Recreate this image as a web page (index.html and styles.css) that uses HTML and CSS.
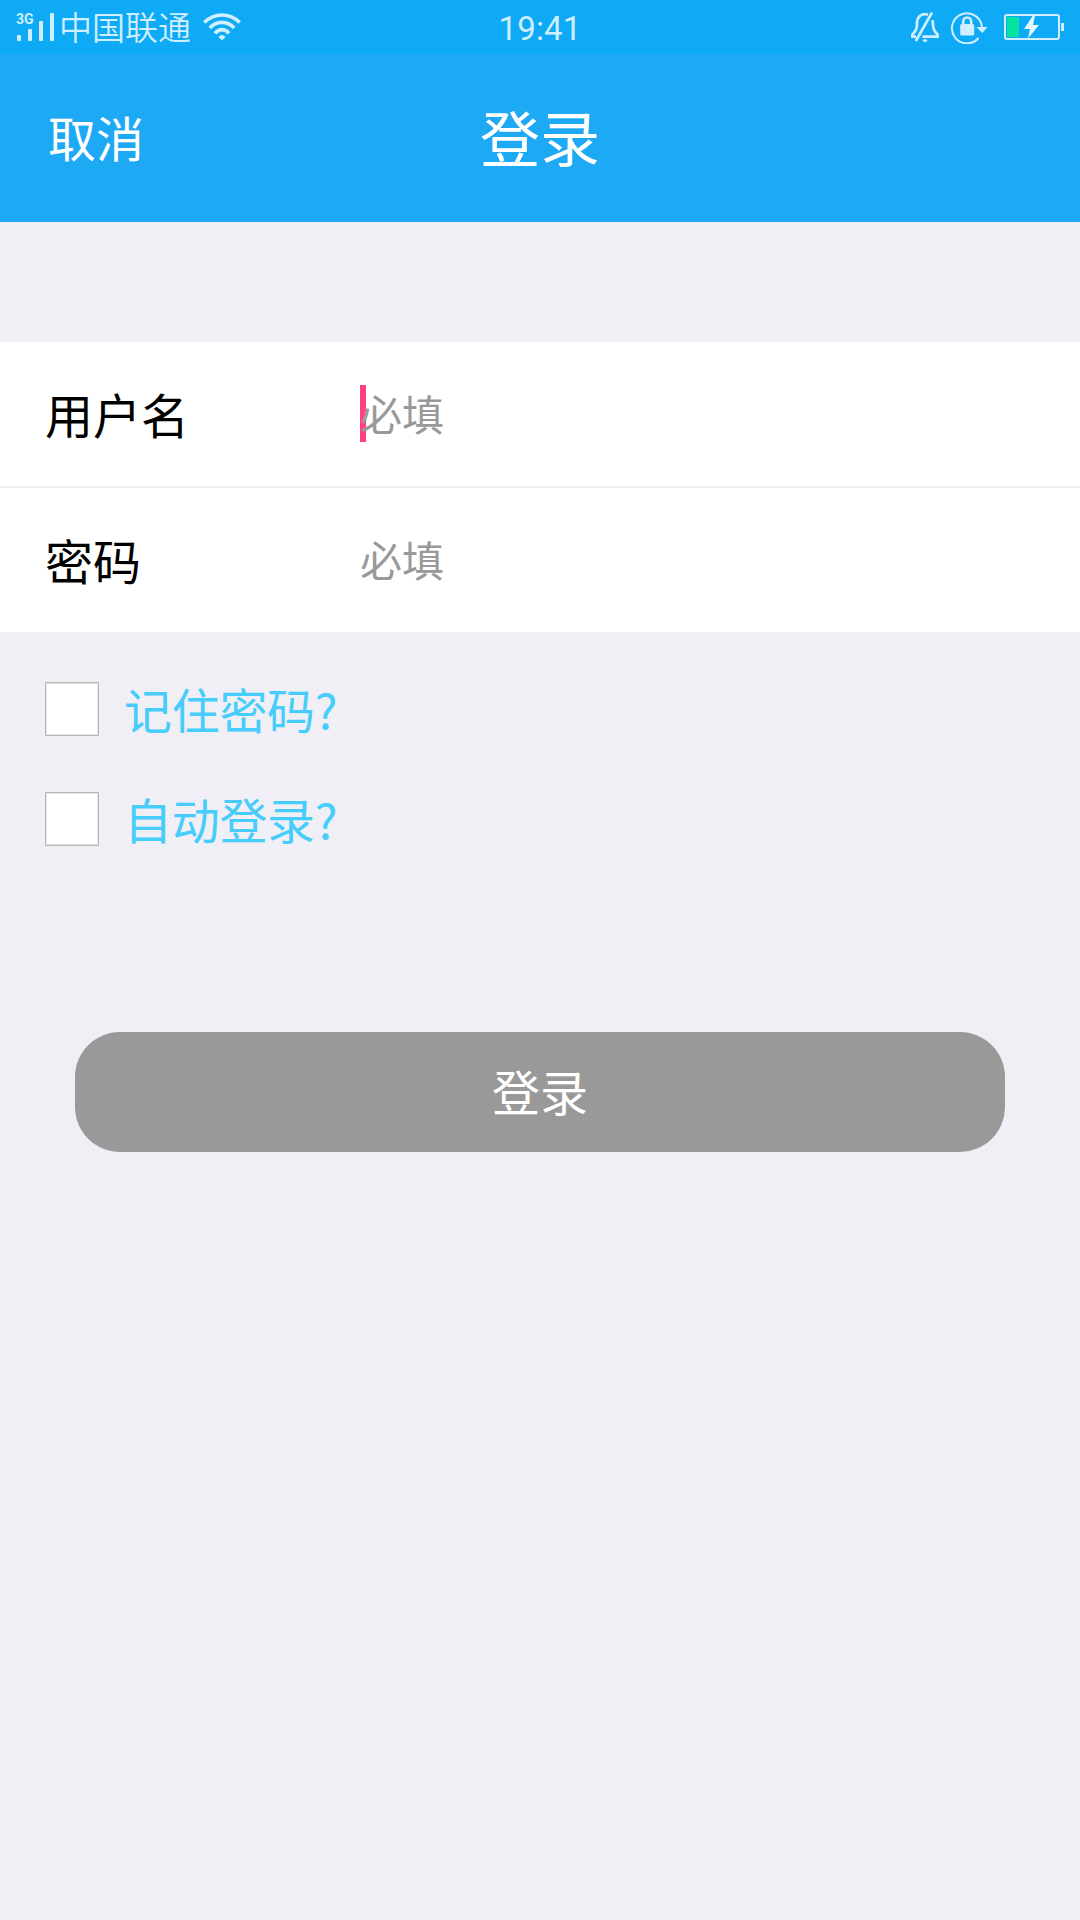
FILE: index.html
```html
<!DOCTYPE html>
<html lang="zh-CN">
<head>
<meta charset="utf-8">
<title>登录</title>
<link rel="stylesheet" href="styles.css">
</head>
<body>
<div class="status">
  <div class="status-left">
    <div class="signal">
      <span class="network">3G</span>
      <svg class="bars" width="38" height="29" viewBox="0 0 38 29" fill="currentColor">
        <rect x="0" y="22" width="4" height="6" rx="1"/><rect x="11" y="16" width="4" height="12" rx="1"/><rect x="22" y="8" width="4" height="20" rx="1"/><rect x="33" y="0" width="4" height="28" rx="1"/>
      </svg>
    </div>
    <span class="carrier">中国联通</span>
    <svg class="wifi" width="38" height="28" viewBox="0 0 38 28" fill="none" stroke="currentColor" stroke-width="3.7">
      <path d="M1.3 9.5Q9 2 19 2T36.7 9.5M6.8 15Q12 9.3 19 9.3T31.2 15M12 20.4Q15 16.6 19 16.6T26 20.4"/>
      <path d="M15.3 23.7Q19 20.2 22.7 23.7L19 27.5Z" fill="currentColor" stroke="none"/>
    </svg>
  </div>
  <span class="clock">19:41</span>
  <div class="status-right">
    <svg width="30" height="32" viewBox="0 0 30 32" fill="none" stroke="currentColor" stroke-width="2.7">
      <path d="M18 3.600C11 1.800 7 6.500 7 12C7 19 5.500 20 2.400 23.500V25.600H6M22.700 9C23 18.500 24 20 27.600 23.500V25.600H12.500"/>
      <path d="M22 1.500L5.800 30"/>
      <ellipse cx="15" cy="29.500" rx="2.200" ry="1.500" fill="currentColor" stroke="none"/>
    </svg>
    <svg width="37" height="33" viewBox="0 0 37 33" fill="none" stroke="currentColor" stroke-width="2">
      <path d="M27.500 27A15 15 0 1 1 31 17"/>
      <path d="M25.500 16H36.500L31.200 22Z" fill="currentColor" stroke="none"/>
      <path d="M12.200 14V10.500A4 4 0 0 1 20.200 10.500V14" stroke-width="2.600"/>
      <rect x="9.200" y="13" width="14" height="11.500" rx="1.500" fill="currentColor" stroke="none"/>
    </svg>
    <svg class="battery" width="60" height="26" viewBox="0 0 60 26">
      <rect x="1" y="1" width="54" height="24" rx="2" fill="none" stroke="currentColor" stroke-width="2"/>
      <rect x="3" y="3" width="12" height="20" fill="#06e2a0"/>
      <path d="M29 1.500L20 15H26L24 24.500L35 11H29L31 1.500Z" fill="#e4f6ff"/>
      <rect x="57" y="9" width="3" height="8" fill="currentColor"/>
    </svg>
  </div>
</div>
<header class="header">
  <span class="cancel">取消</span>
  <h1 class="title">登录</h1>
</header>
<main>
  <div class="fields">
    <div class="row"><span class="label">用户名</span><span class="hint"><i class="caret"></i>必填</span></div>
    <div class="row"><span class="label">密码</span><span class="hint">必填</span></div>
  </div>
  <div class="options">
    <div class="option"><span class="box"></span><span class="option-text">记住密码?</span></div>
    <div class="option"><span class="box"></span><span class="option-text">自动登录?</span></div>
  </div>
  <button class="submit">登录</button>
</main>
</body>
</html>
```
FILE: styles.css
```css
* { box-sizing: border-box; }
body {
  margin: 0;
  min-height: 1920px;
  background: #f0eff5;
  font-family: "Noto Sans CJK SC", sans-serif;
  color: #000;
}
svg { display: block; }
.status {
  height: 54px;
  padding: 0 16px;
  display: grid;
  grid-template-columns: 1fr auto 1fr;
  background: #0eaaf5;
  color: #cfeeff;
}
.status-left, .status-right { display: flex; align-items: flex-start; }
.status-right { justify-content: flex-end; padding-top: 11px; }
.status-right svg + svg { margin-left: 11px; }
.status-right svg.battery { margin: 3px 0 0 16px; }
.signal { position: relative; padding: 13px 0 0 1px; }
.network {
  position: absolute;
  left: 0;
  top: 12px;
  font: bold 14px/14px Roboto, sans-serif;
}
.carrier { margin-left: 4px; font-size: 33px; line-height: 52px; font-weight: 350; }
.wifi { margin: 13px 0 0 12px; }
.clock { font: 33px/58px Roboto, sans-serif; letter-spacing: 0.2px; }
.header {
  height: 168px;
  padding: 0 48px;
  display: grid;
  grid-template-columns: 1fr auto 1fr;
  align-items: center;
  background: #1ea9f5;
  color: #fff;
}
.cancel { padding-bottom: 4px; font-size: 48px; line-height: 72px; }
.title { margin: 0; padding-bottom: 4px; font-size: 60px; line-height: 90px; font-weight: 400; }
.fields { margin-top: 120px; display: grid; gap: 2px; }
.row {
  height: 144px;
  padding: 0 45px;
  display: grid;
  grid-template-columns: 315px 1fr;
  align-items: center;
  background: #fff;
}
.label { padding-bottom: 3px; font-size: 48px; line-height: 72px; }
.hint { position: relative; z-index: 0; padding-bottom: 2px; font-size: 42px; line-height: 62px; color: #999; }
.caret {
  position: absolute;
  z-index: -1;
  left: 0;
  top: 3px;
  width: 6px;
  height: 57px;
  background: #ff4081;
}
.options { margin: 50px 0 0 45px; display: grid; gap: 56px; }
.option { height: 54px; display: flex; align-items: center; gap: 25px; }
.box { width: 54px; height: 54px; background: #fff; border: 1px solid #b8b8b8; box-shadow: inset 0 0 0 1px #e2e2e2; }
.option-text { padding-bottom: 2px; font-size: 48px; line-height: 72px; letter-spacing: -0.3px; color: #46cdfb; }
.submit {
  display: block;
  width: 930px;
  height: 120px;
  margin: 186px auto 0;
  padding: 0 0 4px;
  border: 0;
  border-radius: 45px;
  background: #999;
  color: #fff;
  font: 48px/72px "Noto Sans CJK SC", sans-serif;
}
```
